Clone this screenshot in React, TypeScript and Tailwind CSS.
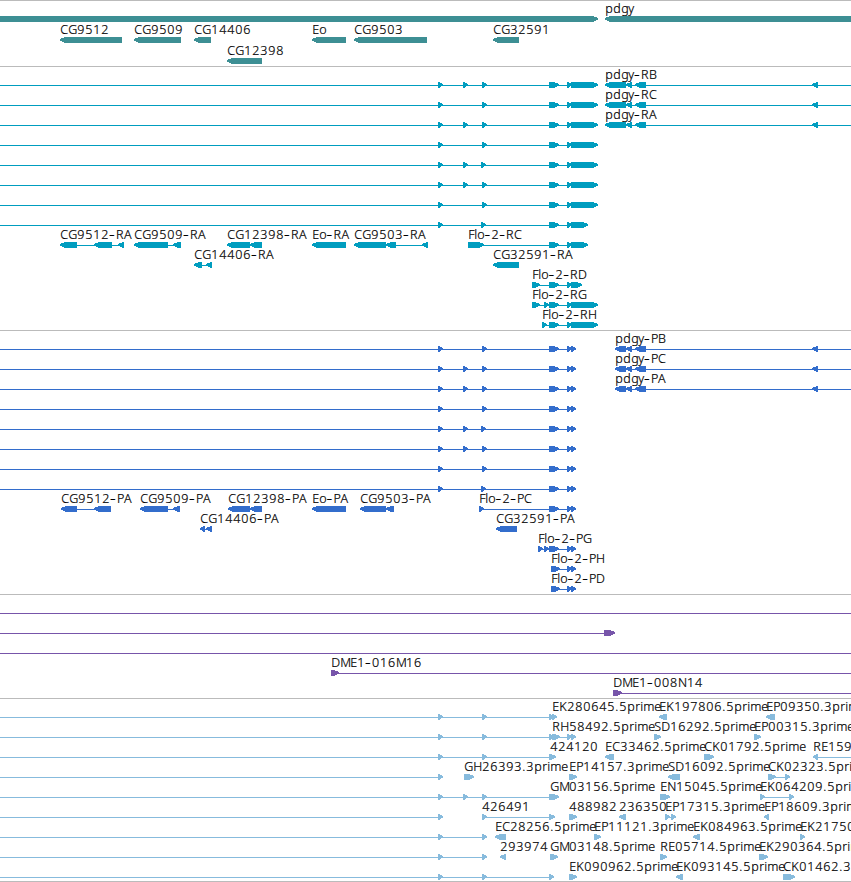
type Exon = [number, number]

type Feature = {
  name?: string
  dir?: 'l' | 'r'
  exons?: Exon[]
  from?: number
  to?: number
}

type Row = Feature[]

const WIDTH = 851
const HEAD = 5

const ADVANCE: Record<string, number> = {
  A: 8, B: 8, C: 8, D: 9, E: 7, F: 6, G: 9, H: 9, K: 8, M: 10, N: 9, P: 7, R: 8, S: 7,
  d: 8, e: 7, g: 7, i: 3, l: 3, m: 11, o: 7.5, p: 8, r: 5, y: 6, '-': 6.7, '.': 4,
}

const A: Exon = [438, 444]
const B: Exon = [463, 469]
const C: Exon = [482, 488]
const C2: Exon = [481, 487]
const D: Exon = [549, 560]
const E: Exon = [567, 573]
const F: Exon = [571, 599]
const F2: Exon = [571, 589]
const G: Exon = [571, 577]

const through = (...exons: Exon[]): Feature => ({ dir: 'r', exons, from: 0 })
const right = (name: string, ...exons: Exon[]): Feature => ({ name, dir: 'r', exons })
const left = (name: string, ...exons: Exon[]): Feature => ({ name, dir: 'l', exons })

const pdgyR = (name: string): Feature => ({
  name, dir: 'l', exons: [[605, 626], [626, 632], [635, 646], [812, 818]], to: WIDTH,
})
const pdgyP = (name: string): Feature => ({
  name, dir: 'l', exons: [[615, 626], [626, 632], [635, 646], [812, 818]], to: WIDTH,
})

const genes: Row[] = [
  [through([0, 599]), left('pdgy', [605, 860])],
  [
    left('CG9512', [60, 122]),
    left('CG9509', [134, 181]),
    left('CG14406', [194, 211]),
    left('Eo', [312, 346]),
    left('CG9503', [354, 427]),
    left('CG32591', [493, 519]),
  ],
  [left('CG12398', [227, 262])],
]

const transcripts: Row[] = [
  [through(A, B, C, D, E, F), pdgyR('pdgy-RB')],
  [through(A, C, D, E, F), pdgyR('pdgy-RC')],
  [through(A, B, C, D, E, F), pdgyR('pdgy-RA')],
  [through(A, C, D, E, F)],
  [through(A, B, C2, D, E, F)],
  [through(A, B, C, D, E, F)],
  [through(A, C, D, E, F)],
  [through(A, C2, D, E, F2)],
  [
    left('CG9512-RA', [60, 77], [94, 112], [118, 124]),
    left('CG9509-RA', [134, 168], [173, 181]),
    left('CG12398-RA', [227, 250], [250, 262]),
    left('Eo-RA', [312, 346]),
    left('CG9503-RA', [354, 386], [386, 396], [422, 428]),
    right('Flo-2-RC', [468, 485], D, E, F2),
  ],
  [left('CG14406-RA', [194, 202], [206, 212]), left('CG32591-RA', [493, 519])],
  [right('Flo-2-RD', [532, 541], D, E, [571, 583])],
  [right('Flo-2-RG', [532, 541], [544, 550], D, E, F)],
  [right('Flo-2-RH', [542, 548], D, E, F)],
]

const proteins: Row[] = [
  [through(A, C, D, E, G), pdgyP('pdgy-PB')],
  [through(A, B, C, D, E, G), pdgyP('pdgy-PC')],
  [through(A, B, C, D, E, G), pdgyP('pdgy-PA')],
  [through(A, C, D, E, G)],
  [through(A, B, C2, D, E, G)],
  [through(A, B, C, D, E, G)],
  [through(A, C, D, E, G)],
  [through(A, C2, D, E, G)],
  [
    left('CG9512-PA', [61, 77], [94, 111]),
    left('CG9509-PA', [140, 168], [173, 180]),
    left('CG12398-PA', [228, 250], [250, 262]),
    left('Eo-PA', [312, 346]),
    left('CG9503-PA', [360, 386], [386, 394]),
    right('Flo-2-PC', [479, 485], D, E, G),
  ],
  [left('CG14406-PA', [200, 205], [206, 212]), left('CG32591-PA', [496, 517])],
  [right('Flo-2-PG', [538, 544], [544, 550], D, E, G)],
  [right('Flo-2-PH', [551, 561], E, G)],
  [right('Flo-2-PD', [551, 561], E, G)],
]

const bacs: Row[] = [
  [{ from: 0, to: WIDTH }],
  [through([604, 616])],
  [{ from: 0, to: WIDTH }],
  [{ name: 'DME1-016M16', dir: 'r', exons: [[331, 340]], to: WIDTH }],
  [{ name: 'DME1-008N14', dir: 'r', exons: [[613, 623]], to: WIDTH }],
]

const ests: Row[] = [
  [
    through(A, C, [549, 555], [552, 558]),
    { name: 'EK280645.5prime', from: 552, to: 552 },
    left('EK197806.5prime', [659, 667]),
    left('EP09350.3prime', [766, 775]),
  ],
  [
    through(A, C, [549, 556], [552, 561], E, G),
    { name: 'RH58492.5prime', from: 552, to: 552 },
    right('SD16292.5prime', [654, 662]),
    right('EP00315.3prime', [754, 762]),
  ],
  [
    through(A, C, [549, 557]),
    { name: '424120', from: 550, to: 550 },
    left('EC33462.5prime', [605, 614]),
    right('CK01792.5prime', [704, 715]),
    { name: 'RE159', dir: 'l', exons: [[813, 818]], to: WIDTH },
  ],
  [
    through(A),
    right('GH26393.3prime', [464, 475]),
    right('EP14157.3prime', [569, 578]),
    left('SD16092.5prime', [668, 680]),
    right('CK02323.5prime', [768, 777], [785, 791]),
  ],
  [
    through(A, B, C, [549, 560]),
    { name: 'GM03156.5prime', from: 550, to: 550 },
    right('EN15045.5prime', [660, 671]),
    right('EK064209.5prime', [760, 766], [789, 795]),
  ],
  [
    through(A),
    right('426491', [482, 488], [549, 556]),
    right('488982', [569, 578]),
    left('236350', [619, 626]),
    right('EP17315.3prime', [665, 671], [671, 677]),
    left('EP18609.3prime', [764, 769]),
  ],
  [
    through(A, C),
    left('EC28256.5prime', [495, 506]),
    right('EP11121.3prime', [594, 602]),
    left('EK084963.5prime', [693, 700]),
    right('EK21750', [800, 806]),
  ],
  [
    through(A, C),
    left('293974', [500, 506]),
    right('GM03148.5prime', [550, 559]),
    right('RE05714.5prime', [660, 668]),
    right('EK290364.5prime', [759, 769]),
  ],
  [
    through(A, C, [549, 555]),
    right('EK090962.5prime', [569, 578]),
    left('EK093145.5prime', [676, 683]),
    right('CK01462.3prime', [783, 796]),
  ],
]

// Splits a name at its hyphens and gives every glyph its own x
function layoutRuns(name: string, start: number) {
  let x = start
  return name.split(/(-)/).map((run) => {
    const xs = [...run].map((ch) => {
      const at = x
      x += ADVANCE[ch] ?? 8
      return at
    })
    return { run, xs }
  })
}

function exonPoints([a, b]: Exon, dir?: 'l' | 'r') {
  if (dir === 'l') {
    const tip = a - 0.4
    const h = Math.min(a + HEAD, b - 1)
    return `${b},15 ${h},15 ${tip},17.3 ${tip},18.2 ${h},21 ${b},21`
  }
  const tip = b - 0.8
  const h = Math.max(b - HEAD - 1, a + 1)
  return `${a},15 ${h},15 ${tip},17.2 ${tip},18.3 ${h},21 ${a},21`
}

// Hyphens are set larger than the rest, they run the full width of their cell
function Label({ name, x }: { name: string; x: number }) {
  return (
    <text y={12} className="fill-black stroke-black stroke-[0.2px]">
      {layoutRuns(name, x + 0.2).map(({ run, xs }, i) =>
        run === '-' ? (
          <tspan key={i} x={xs[0] - 0.5} y={12.8} className="stroke-none text-[19px]">-</tspan>
        ) : (
          <tspan key={i} x={xs.join(' ')} y={12}>{run}</tspan>
        ),
      )}
    </text>
  )
}

function FeatureGlyph({ name, dir, exons = [], from, to }: Feature) {
  const start = from ?? exons[0][0]
  const end = to ?? exons[exons.length - 1][1] - 2
  return (
    <g>
      {end > start && (from !== undefined || to !== undefined || exons.length > 1) && (
        <rect x={start + (dir === 'l' ? 2 : 0)} y={18} width={end - start} height={1} />
      )}
      {exons.map((exon) => (
        <polygon key={exon[0]} points={exonPoints(exon, dir)} />
      ))}
      {name && <Label name={name} x={start} />}
    </g>
  )
}

function Track({ rows, color, rowClass = 'h-5', className }: {
  rows: Row[]
  color: string
  rowClass?: string
  className: string
}) {
  return (
    <section className={`flex flex-col border-t border-[#bbbbbb] ${className}`}>
      {rows.map((row, i) => (
        <svg
          key={i}
          width={WIDTH}
          shapeRendering="crispEdges"
          className={`block shrink-0 overflow-visible font-['Noto_Sans','DejaVu_Sans',sans-serif] text-[12.5px] font-light ${rowClass} ${color}`}
        >
          {row.map((feature, j) => (
            <FeatureGlyph key={j} {...feature} />
          ))}
        </svg>
      ))}
    </section>
  )
}

export default function App() {
  return (
    <main className="h-[882px] w-[851px] overflow-hidden bg-white">
      <Track rows={genes} color="fill-[#3d8f94]" rowClass="h-[21px]" className="h-[66px]" />
      <Track rows={transcripts} color="fill-[#009dbf]" className="h-[264px]" />
      <Track rows={proteins} color="fill-[#336dcc]" className="h-[264px]" />
      <Track rows={bacs} color="fill-[#7755aa]" className="h-[104px]" />
      <Track rows={ests} color="fill-[#87bbdd]" className="h-[184px] border-b" />
    </main>
  )
}
